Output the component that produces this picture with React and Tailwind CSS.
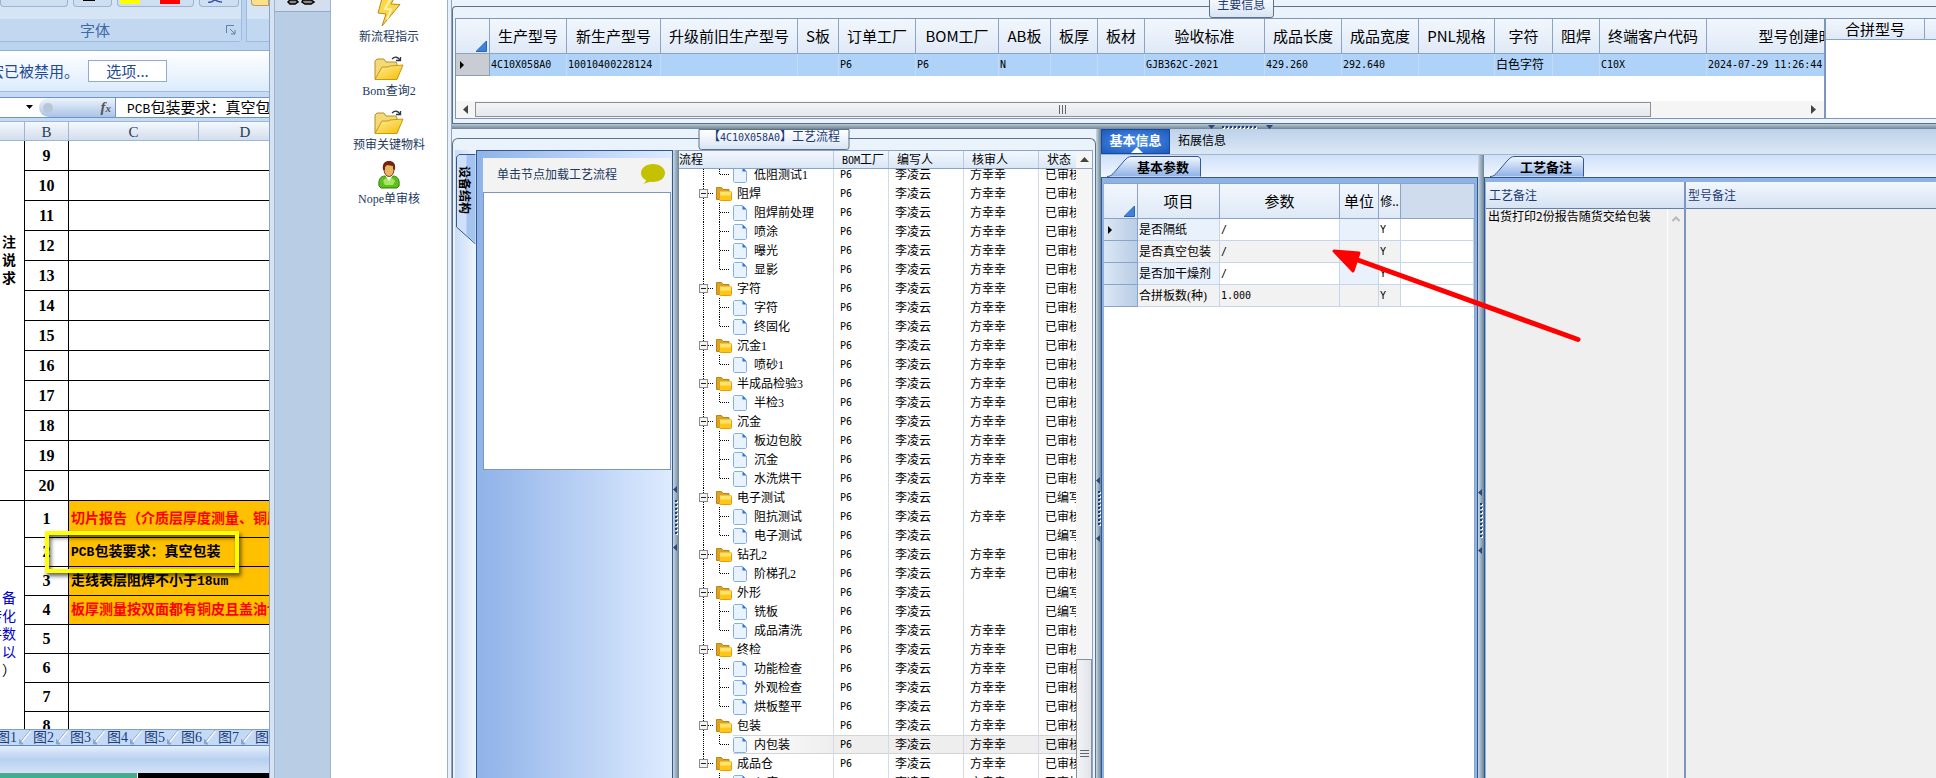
import React from 'react';
import clsx from 'clsx';

const mono = 'font-["DejaVu_Sans_Mono","Noto_Sans_CJK_SC",monospace] text-[10px]';
const song = 'font-["Liberation_Serif","Noto_Sans_CJK_SC",sans-serif] text-[12px]';

const mainColumns = [
    { label: '生产型号', width: 'w-[77px]', value: '4C10X058A0' },
    { label: '新生产型号', width: 'w-[94px]', value: '10010400228124' },
    { label: '升级前旧生产型号', width: 'w-[137px]', value: '' },
    { label: 'S板', width: 'w-[41px]', value: '' },
    { label: '订单工厂', width: 'w-[77px]', value: 'P6' },
    { label: 'BOM工厂', width: 'w-[83px]', value: 'P6' },
    { label: 'AB板', width: 'w-[52px]', value: 'N' },
    { label: '板厚', width: 'w-[47px]', value: '' },
    { label: '板材', width: 'w-[47px]', value: '' },
    { label: '验收标准', width: 'w-[120px]', value: 'GJB362C-2021' },
    { label: '成品长度', width: 'w-[77px]', value: '429.260' },
    { label: '成品宽度', width: 'w-[77px]', value: '292.640' },
    { label: 'PNL规格', width: 'w-[76px]', value: '' },
    { label: '字符', width: 'w-[58px]', value: '白色字符', cjk: true },
    { label: '阻焊', width: 'w-[47px]', value: '' },
    { label: '终端客户代码', width: 'w-[107px]', value: 'C10X' },
    { label: '型号创建时间', width: 'w-[194px]', value: '2024-07-29 11:26:44' },
];

const tree = [
    { name: '低阻测试1', leaf: true, last: true },
    { name: '阻焊' },
    { name: '阻焊前处理', leaf: true },
    { name: '喷涂', leaf: true },
    { name: '曝光', leaf: true },
    { name: '显影', leaf: true, last: true },
    { name: '字符' },
    { name: '字符', leaf: true },
    { name: '终固化', leaf: true, last: true },
    { name: '沉金1' },
    { name: '喷砂1', leaf: true, last: true },
    { name: '半成品检验3' },
    { name: '半检3', leaf: true, last: true },
    { name: '沉金' },
    { name: '板边包胶', leaf: true },
    { name: '沉金', leaf: true },
    { name: '水洗烘干', leaf: true, last: true },
    { name: '电子测试', open: true },
    { name: '阻抗测试', leaf: true },
    { name: '电子测试', leaf: true, last: true, open: true },
    { name: '钻孔2' },
    { name: '阶梯孔2', leaf: true, last: true },
    { name: '外形', open: true },
    { name: '铣板', leaf: true, open: true },
    { name: '成品清洗', leaf: true, last: true },
    { name: '终检' },
    { name: '功能检查', leaf: true },
    { name: '外观检查', leaf: true },
    { name: '烘板整平', leaf: true, last: true },
    { name: '包装' },
    { name: '内包装', leaf: true, last: true, selected: true },
    { name: '成品仓', end: true },
    { name: '入库', leaf: true, last: true, end: true },
];

const params = [
    { name: '是否隔纸', value: '/' },
    { name: '是否真空包装', value: '/' },
    { name: '是否加干燥剂', value: '/' },
    { name: '合拼板数(种)', value: '1.000' },
];

const notes = [
    { no: 1, text: '切片报告（介质层厚度测量、铜厚测量）', tone: 'text-[#f00]', height: 'h-[37px]' },
    { no: 2, latin: 'PCB', text: '包装要求：真空包装', tone: 'text-black', height: 'h-[29px]' },
    { no: 3, text: '走线表层阻焊不小于', tail: '18um', tone: 'text-black', height: 'h-[29px]' },
    { no: 4, text: '板厚测量按双面都有铜皮且盖油计算', tone: 'text-[#f00]', height: 'h-[29px]' },
];

function FolderOpenIcon() {
    return (
        <svg width="30" height="25" viewBox="0 0 30 25">
            <defs>
                <linearGradient id="fo" x1="0" y1="0" x2="1" y2="1">
                    <stop offset="0" stopColor="#fff0a0" />
                    <stop offset="1" stopColor="#f3bd00" />
                </linearGradient>
            </defs>
            <path d="M1 23V5l2-2h7l2 3h10l1 2v15z" fill="#f3d978" stroke="#b98f23" />
            <path d="M1 23.500 8 11h6l2-1 13-1-6 14.500z" fill="url(#fo)" stroke="#c79a10" />
            <path d="M18 3c3-3 6-2 8 1M22 4.500h4.500V1" fill="none" stroke="#2b3345" strokeWidth="1.300" />
        </svg>
    );
}

function BoltIcon() {
    return (
        <svg width="24" height="28" viewBox="0 0 24 28">
            <path d="M6-4h13l-5 9 9 .5L5 27l4-12-8-1z" fill="#fbd84b" stroke="#b98a1c" />
            <path d="M8-3h7L8 10l6 .5-4 10" fill="none" stroke="#fff3a8" strokeWidth="2" />
        </svg>
    );
}

function PersonIcon() {
    return (
        <svg width="22" height="28" viewBox="0 0 22 28">
            <path d="M1 25c-1-7 2-10 6-10h8c4 0 7 3 6 10l-2 2H3z" fill="#5fbf1d" stroke="#2f7d10" />
            <path d="M5 20c2-4 10-4 12 0l-2 4H7z" fill="#a5e663" />
            <path d="M7 14h8l-4 6z" fill="#fff" />
            <ellipse cx="11" cy="8.500" rx="5" ry="7" fill="#e9b366" stroke="#7a3c12" />
            <path d="M5 9C4 2 7 0 11 0s7 2 6 9l-2-1V5L9 4 7 6v3z" fill="#75230c" />
        </svg>
    );
}

function FolderIcon() {
    return (
        <svg className="shrink-0" width="16" height="14" viewBox="0 0 16 14">
            <path d="M0.500 12.500v-12h5l1.500 2h6v10z" fill="#d9a520" stroke="#b98518" />
            <rect x="3.500" y="4.500" width="12" height="9" rx="1" fill="#ffc61a" stroke="#e89c0c" />
            <path d="M4 5.500h11M4 7.500h11" stroke="#ffe36b" strokeWidth="2" />
        </svg>
    );
}

function DocIcon() {
    return (
        <svg className="shrink-0" width="14" height="16" viewBox="0 0 14 16">
            <path d="M1.500 0.500h8l4 4v10l-1 1h-11l-1-1v-13z" fill="#e9f3ff" stroke="#7fb0ee" />
            <path d="M9.500 0.500v4h4z" fill="#2e74d6" />
        </svg>
    );
}

function Guides({ row }) {
    if (!row.leaf) {
        return (
            <svg className="shrink-0" width="37" height="19">
                <path d={row.end ? 'M24.500 0v9' : 'M24.500 0v19'} stroke="#000" strokeDasharray="1 1" />
                <path d="M29 9.500h5" stroke="#000" strokeDasharray="1 1" />
                <rect x="20.500" y="5.500" width="8" height="8" fill="#f4f4f2" stroke="#8c8c8c" />
                <path d="M22 9.500h5" stroke="#222" />
            </svg>
        );
    }
    return (
        <svg className="shrink-0" width="54" height="19">
            {!row.end && <path d="M24.500 0v19" stroke="#000" strokeDasharray="1 1" />}
            <path d={row.last ? 'M40.500 0v10' : 'M40.500 0v19'} stroke="#000" strokeDasharray="1 1" />
            <path d="M41 9.500h9" stroke="#000" strokeDasharray="1 1" />
        </svg>
    );
}

function SlantTab({ children }) {
    return (
        <button className="relative h-[21px] w-[94px] pl-[30px] text-left text-[13px] leading-5 font-bold text-black">
            <svg className="absolute inset-0" width="94" height="21">
                <defs>
                    <linearGradient id="slant" x1="0" y1="0" x2="0" y2="1">
                        <stop offset="0" stopColor="#f3f8ff" />
                        <stop offset="1" stopColor="#8fb2e6" />
                    </linearGradient>
                </defs>
                <path d="M0 20.500c4 0 5-2 8-5L17 5c3-3 4-4.500 8-4.500h66l2.500 2v18" fill="url(#slant)" stroke="#33588f" />
            </svg>
            <span className="relative">{children}</span>
        </button>
    );
}

function Grip({ vertical }) {
    const dots = [0, 4, 8, 12, 16, 20, 24, 28, 32];
    return (
        <svg
            className="shrink-0"
            width={vertical ? 6 : 65}
            height={vertical ? 65 : 6}
            viewBox={vertical ? '0 0 6 65' : '0 0 65 6'}
        >
            <g transform={vertical ? 'matrix(0 1 1 0 0 0)' : undefined}>
                <path d={vertical ? 'M0 4h7l-3.500-4zM58 4h7l-3.500-4z' : 'M0 1h7l-3.500 4zM58 1h7l-3.500 4z'} fill="#2f4677" />
                {dots.map((d) => (
                    <g key={d}>
                        <rect x={15 + d} y="3" width="2" height="2" fill="#fff" />
                        <rect x={14 + d} y="2" width="2" height="2" fill="#203c78" />
                    </g>
                ))}
            </g>
        </svg>
    );
}

function Corner() {
    return (
        <svg className="mt-5 mr-0.5 ml-auto" width="11" height="11">
            <path d="M10.500 0v10.500H0z" fill="#3d83dc" stroke="#2c64b4" />
        </svg>
    );
}

function Marker() {
    return (
        <svg className="ml-1" width="5" height="8">
            <path d="M0 0l4 4-4 4z" />
        </svg>
    );
}

function Excel() {
    return (
        <div className="flex w-[269px] shrink-0 flex-col overflow-hidden bg-[#c5daf3]">
            <div className="flex h-[51px] shrink-0 items-start border-b border-[#8fb0d8] bg-[#bcd3ef] pb-2">
                <div className="flex h-[42px] w-[242px] shrink-0 flex-col rounded-br border-r border-b border-[#9dbbe0] bg-[#d6e5f5]">
                    <div className="flex h-[7px] gap-[5px]">
                        <div className="w-[68px] rounded-b border border-t-0 border-[#9ab4d6] bg-[#cfdff2]" />
                        <div className="flex w-[39px] justify-center rounded-b border border-t-0 border-[#9ab4d6] bg-[#cfdff2]">
                            <div className="mr-2 h-px w-3 bg-black" />
                        </div>
                        <div className="flex w-[77px] gap-5 rounded-b border border-t-0 border-[#9ab4d6] bg-[#cfdff2] pl-0.5">
                            <div className="h-1 w-5 bg-[#ff0]" />
                            <div className="h-1 w-5 bg-[#f00]" />
                        </div>
                        <div className="w-[40px] rounded-b border border-t-0 border-[#9ab4d6] bg-[#cfdff2]">
                            <svg className="ml-2" width="14" height="3">
                                <path d="M0 2.500c3 0 5-1 7-3 2 2 4 2.500 7 2.500" fill="none" stroke="#3954a8" strokeWidth="1.500" />
                            </svg>
                        </div>
                    </div>
                    <div className="mt-3 flex h-[22px] items-center bg-[#c1d8f0] text-[15px] text-[#3f69a8]">
                        <span className="w-[190px] text-center">字体</span>
                        <svg className="ml-9" width="10" height="10">
                            <path d="M0.500 8V0.500H8M4 4l5 5M9 5v4H5" fill="none" stroke="#5f7fae" />
                        </svg>
                    </div>
                </div>
                <div className="ml-1 flex h-[42px] flex-1 flex-col border-b border-l border-[#9dbbe0] bg-[#d6e5f5]">
                    <div className="ml-1 h-[6px] rounded-bl border border-t-0 border-[#c79c4a] bg-[#fbe08e]" />
                    <div className="mt-auto h-[22px] bg-[#c1d8f0]" />
                </div>
            </div>
            <div className="flex h-[41px] shrink-0 items-center border-b border-[#a0bcdf] bg-linear-to-t from-[#dcebfb] to-white text-[15px] text-[#1f4b93]">
                <div className="flex w-[79px] shrink-0 justify-end overflow-hidden whitespace-nowrap">宏已被禁用。</div>
                <button className="ml-[9px] h-[22px] w-[79px] border border-[#93abcf] bg-white leading-5">选项...</button>
            </div>
            <div className="mt-[5px] flex h-[21px] shrink-0 items-center border-y border-[#6f93c4] bg-white text-[15px]">
                <svg className="ml-[26px] shrink-0" width="8" height="5">
                    <path d="M0 0h7l-3.500 4z" />
                </svg>
                <div className="ml-[5px] flex h-full w-[77px] shrink-0 items-center rounded-l-full border-r border-[#6f93c4] bg-linear-to-b from-[#eef4fc] to-[#a9c3e6] pl-1">
                    <div className="size-[10px] rounded-full bg-[#b9c6d8]" />
                    <span className="mr-1 ml-auto font-['Liberation_Serif'] text-[15px] font-bold text-[#555] italic">
                        f<span className="text-[11px]">x</span>
                    </span>
                </div>
                <span className="shrink-0 pl-[11px] whitespace-nowrap">
                    <span className="font-['Liberation_Mono'] text-[13px]">PCB</span>包装要求：真空包装
                </span>
            </div>
            <div className="mt-[3px] flex h-5 shrink-0 border-y border-[#9db6d8] bg-linear-to-b from-[#f4f8fd] to-[#d3deed] text-center font-['Liberation_Serif'] text-[15px] leading-5 text-[#2b3c55]">
                <div className="w-[25px] shrink-0 border-r border-[#9db6d8]" />
                <div className="w-[44px] shrink-0 border-r border-[#9db6d8]">B</div>
                <div className="w-[130px] shrink-0 border-r border-[#9db6d8]">C</div>
                <div className="w-[92px] shrink-0">D</div>
            </div>
            <div className="relative min-h-0 flex-1 overflow-hidden bg-white">
                <table className="w-full table-fixed border-separate border-spacing-0 font-['Liberation_Serif','Noto_Sans_CJK_SC',serif] text-[16px]">
                    <colgroup>
                        <col className="w-[25px]" />
                        <col className="w-[44px]" />
                        <col />
                    </colgroup>
                    <tbody>
                        {[9, 10, 11, 12, 13, 14, 15, 16, 17, 18, 19, 20].map((n) => (
                            <tr key={n} className="h-[30px]">
                                {n === 9 && (
                                    <td rowSpan={12} className="border-r border-b border-black pt-[93px] pr-2 text-right align-top text-[14px] leading-[18px] font-bold">
                                        注<br />说<br />求
                                    </td>
                                )}
                                <td className="border-r border-b border-black p-0 text-center leading-5 font-bold">{n}</td>
                                <td className="border-b border-black p-0" />
                            </tr>
                        ))}
                        {notes.map((n) => (
                            <tr key={n.no} className={n.height}>
                                {n.no === 1 && (
                                    <td rowSpan={8} className="border-r border-black p-0 pt-[89px] align-top text-[14px] leading-[18px] text-[#00c]">
                                        <div className="flex flex-col items-end overflow-hidden pr-2 whitespace-nowrap">
                                            <span>备</span>
                                            <span>转化</span>
                                            <span>件数</span>
                                            <span>以</span>
                                            <span className="text-black">）</span>
                                        </div>
                                    </td>
                                )}
                                <td className="border-r border-b border-black p-0 text-center leading-5 font-bold">{n.no}</td>
                                <td className={clsx('overflow-hidden border-b border-black bg-[#ffc000] p-0 pl-0.5 text-[14px] leading-5 font-bold whitespace-nowrap', n.tone)}>
                                    {n.latin && <span className="font-['Liberation_Mono'] text-[13px]">{n.latin}</span>}
                                    {n.text}
                                    {n.tail && <span className="font-['Liberation_Mono'] text-[13px]">{n.tail}</span>}
                                </td>
                            </tr>
                        ))}
                        {[5, 6, 7, 8].map((n) => (
                            <tr key={n} className="h-[29px]">
                                <td className="border-r border-b border-black p-0 text-center leading-5 font-bold">{n}</td>
                                <td className="border-b border-black p-0" />
                            </tr>
                        ))}
                    </tbody>
                </table>
                {/* highlight frame over the packing requirement */}
                <div className="absolute top-[390px] left-[45px] h-[42px] w-[194px] border-4 border-[#ff0] shadow-[2px_3px_4px_rgba(0,0,0,0.6),inset_2px_3px_4px_rgba(0,0,0,0.6)]" />
            </div>
            <div className="flex h-4 shrink-0 overflow-hidden border-t border-[#7f9fcb] bg-[#c4d9f5] font-['Liberation_Serif','Noto_Sans_CJK_SC',serif] text-[14px] leading-4 text-[#1b3d7a]">
                <div className="-ml-1 flex">
                    {[1, 2, 3, 4, 5, 6, 7, 8].map((n) => (
                        <button key={n} className="flex w-[37px] shrink-0 items-center">
                            图{n}
                            <svg className="ml-0.5" width="12" height="15">
                                <path d="M0 14.500 11 1" stroke="#fff" strokeWidth="2" />
                                <path d="M0 13.500 11 0M0 9l4 5H0z" stroke="#8aa5cc" fill="#8aa5cc" />
                            </svg>
                        </button>
                    ))}
                </div>
            </div>
            <div className="h-7 shrink-0 border-t border-[#5f86bd] bg-linear-to-b from-[#e3eefb] via-[#b9d0f0] to-[#d3e2f6]" />
            <div className="flex h-[5px] shrink-0 bg-black">
                <div className="w-[138px] border-r border-white bg-[#45ad8c]" />
            </div>
        </div>
    );
}

function Shortcuts() {
    const items = [
        { label: '新流程指示', icon: <BoltIcon />, height: 'h-[46px]' },
        { label: 'Bom查询2', icon: <FolderOpenIcon />, height: 'h-[54px]' },
        { label: '预审关键物料', icon: <FolderOpenIcon />, height: 'h-[54px]' },
        { label: 'Nope单审核', icon: <PersonIcon />, height: 'h-[54px]' },
    ];
    return (
        <nav className="flex w-[183px] shrink-0 border-x border-[#8ba3c4] bg-[#d5e3f3]">
            <div className="ml-1 flex w-[57px] flex-col border-x border-[#9db3d2] bg-[#b9cde5]">
                <div className="h-3 border-b border-[#93a9c8] bg-[#d3dfef] pl-3">
                    <svg width="28" height="5">
                        <path d="M3 0h6l2 2-3 2H3L1 2zM16 0h8l3 2-3 2h-6l-3-2z" fill="#888" stroke="#000" strokeWidth="1.500" />
                    </svg>
                </div>
            </div>
            <ul className="flex flex-1 flex-col bg-white">
                {items.map((item) => (
                    <li key={item.label}>
                        <button className={clsx('flex w-full flex-col items-center justify-end gap-px overflow-hidden text-[#22385c]', item.height, song)}>
                            <span className="flex shrink-0 items-end">{item.icon}</span>
                            <span className="leading-[18px]">{item.label}</span>
                        </button>
                    </li>
                ))}
            </ul>
            <div className="w-1 border-l border-[#a5aebb] bg-[#e9f0f8]" />
        </nav>
    );
}

function MainInfo() {
    return (
        <section className="relative h-[123px] shrink-0 bg-[#eaf3fc] pt-[6px]">
            <div className="h-full rounded-tl border-t border-l border-[#5f7186] pt-[11px] pl-0.5">
                <div className="flex h-[101px] border-t border-b border-l border-[#7c97bd] bg-white">
                    <div className="flex min-w-0 flex-1 flex-col overflow-hidden">
                        <table className="w-[1445px] table-fixed border-separate border-spacing-0">
                            <thead>
                                <tr className="h-[35px]">
                                    <th className="w-[34px] border-r border-b border-[#8aa4c8] bg-linear-to-b from-[#f2f7fd] to-[#dfe9f6] p-0">
                                        <Corner />
                                    </th>
                                    {mainColumns.map((c) => (
                                        <th key={c.label} className={clsx('border-r border-b border-[#8aa4c8] bg-linear-to-b from-[#f2f7fd] to-[#dfe9f6] p-0 text-[15px] leading-5 font-normal whitespace-nowrap', c.width)}>
                                            {c.label}
                                        </th>
                                    ))}
                                </tr>
                            </thead>
                            <tbody>
                                <tr className="h-[22px]">
                                    <td className="border-r border-b border-[#8f9db0] bg-[#c9cdd3] p-0">
                                        <Marker />
                                    </td>
                                    {mainColumns.map((c) => (
                                        <td key={c.label} className={clsx('border-r border-[#c3dcf7] bg-[#afd3f8] p-0 pl-px leading-4 whitespace-nowrap', c.cjk ? song : mono)}>
                                            {c.value}
                                        </td>
                                    ))}
                                </tr>
                            </tbody>
                        </table>
                        <div className="mt-auto flex h-[17px] items-center bg-[#f5f5f5]">
                            <svg className="ml-[7px] shrink-0" width="12" height="9">
                                <path d="M5 0v9L0 4.500z" fill="#444" />
                            </svg>
                            <div className="flex h-[15px] w-[86%] items-center justify-center border border-[#8c8f94] bg-linear-to-b from-[#f3f4f7] to-[#e4e7ec]">
                                <svg width="9" height="9">
                                    <path d="M.5 0v9M3.500 0v9M6.500 0v9" stroke="#666" />
                                </svg>
                            </div>
                            <svg className="mr-[7px] ml-auto" width="6" height="9">
                                <path d="M0 0v9l5-4.500z" fill="#444" />
                            </svg>
                        </div>
                    </div>
                    <div className="w-[112px] shrink-0 border-l-2 border-[#7c97bd]">
                        <div className="flex h-[21px] border-b border-[#8aa4c8] bg-linear-to-b from-[#f2f7fd] to-[#dfe9f6] text-[15px] leading-5">
                            <div className="w-[99px] border-r border-[#8aa4c8] text-center">合拼型号</div>
                        </div>
                    </div>
                </div>
            </div>
            <div className="absolute top-[-7px] left-[51%] h-[25px] w-[65px] rounded-[3px] border border-[#5f7186] bg-linear-to-b from-white to-[#d9e5f4] text-center text-[12px] leading-[20px] text-[#1c3a74]">
                主要信息
            </div>
        </section>
    );
}

function ProcessTree() {
    return (
        <div className="flex min-w-0 flex-1 flex-col border-t border-r border-[#8aa4c8] bg-white">
            <div className={clsx('flex h-[18px] shrink-0 border-b border-[#8aa4c8] bg-linear-to-b from-[#f2f7fd] to-[#dbe7f6] leading-[18px]', song)}>
                <div className="min-w-0 flex-1 border-r border-[#b9c9e0]">流程</div>
                <div className="w-[55px] border-r border-[#b9c9e0] pl-2 whitespace-nowrap">
                    <span className="font-['DejaVu_Sans_Mono'] text-[10px]">BOM</span>工厂
                </div>
                <div className="w-[75px] border-r border-[#b9c9e0] pl-2">编写人</div>
                <div className="w-[75px] border-r border-[#b9c9e0] pl-2">核审人</div>
                <div className="w-[37px] pl-2 whitespace-nowrap">状态</div>
                <div className="flex w-4 items-center justify-center bg-[#f5f5f5]">
                    <svg width="9" height="5">
                        <path d="M0 5h9L4.500 0z" fill="#444" />
                    </svg>
                </div>
            </div>
            <div className="flex min-h-0 flex-1">
                <div className="min-w-0 flex-1 overflow-hidden">
                    <table className={clsx('-mt-1 w-full table-fixed border-separate border-spacing-0', song)}>
                        <colgroup>
                            <col />
                            <col className="w-[55px]" />
                            <col className="w-[75px]" />
                            <col className="w-[75px]" />
                            <col className="w-[37px]" />
                        </colgroup>
                        <tbody>
                            {tree.map((row, i) => {
                                const cell = clsx(
                                    'overflow-hidden p-0 leading-4 whitespace-nowrap',
                                    row.selected && 'border-y border-y-[#d4d4d4] bg-[#eeeeee]'
                                );
                                return (
                                    <tr key={i} className="h-[19px]">
                                        <td className="overflow-hidden border-r border-[#d5dbe4] p-0">
                                            <div className="flex h-[19px] items-center">
                                                <Guides row={row} />
                                                <div className={clsx('flex h-full min-w-0 flex-1 items-center whitespace-nowrap', row.leaf ? 'gap-[7px]' : 'gap-[5px]', row.selected && 'border-y border-[#d4d4d4] bg-linear-to-r from-white to-[#eeeeee]')}>
                                                    {row.leaf ? <DocIcon /> : <FolderIcon />}
                                                    {row.name}
                                                </div>
                                            </div>
                                        </td>
                                        <td className={clsx(cell, 'border-r border-r-[#d5dbe4]')}>
                                            <span className="pl-1.5 font-['DejaVu_Sans_Mono'] text-[10px]">P6</span>
                                        </td>
                                        <td className={clsx(cell, 'border-r border-r-[#d5dbe4]')}>
                                            <span className="pl-1.5">李凌云</span>
                                        </td>
                                        <td className={clsx(cell, 'border-r border-r-[#d5dbe4]')}>
                                            <span className="pl-1.5">{row.open ? '' : '方幸幸'}</span>
                                        </td>
                                        <td className={cell}>
                                            <span className="pl-1.5">{row.open ? '已编写' : '已审核'}</span>
                                        </td>
                                    </tr>
                                );
                            })}
                        </tbody>
                    </table>
                </div>
                <div className="flex w-4 shrink-0 flex-col justify-end bg-[#f5f5f5]">
                    <div className="flex h-[119px] justify-center border border-b-0 border-[#8c8f94] bg-linear-to-r from-[#f3f4f7] to-[#e0e4ea] pt-[90px]">
                        <svg width="9" height="9">
                            <path d="M0 .5h9M0 3.500h9M0 6.500h9" stroke="#666" />
                        </svg>
                    </div>
                </div>
            </div>
        </div>
    );
}

function Process() {
    return (
        <section className="relative flex w-[644px] shrink-0 flex-col bg-[#eaf3fc] pt-[9px]">
            <div className="flex min-h-0 flex-1 rounded-t-md border-x border-t border-[#5f7186] px-0.5 pt-[11px]">
                <div className="w-[21px] shrink-0 bg-linear-to-r from-[#c9dcf6] to-[#eef5ff] pt-1">
                    <button className="relative h-[90px] w-[21px]">
                        <svg className="absolute inset-0" width="21" height="90">
                            <path d="M20.500 .5H4L1.500 3v70l19 17" fill="#cfe0f8" stroke="#33588f" />
                            <path d="M20.500 1h-9v80l9 8z" fill="#a5c3ef" />
                        </svg>
                        <span className="absolute top-[12px] left-0.5 text-[12px] leading-4 font-bold [text-orientation:sideways] [writing-mode:vertical-rl]">
                            设备结构
                        </span>
                    </button>
                </div>
                <div className="w-[197px] shrink-0 border-x border-t border-[#33588f] bg-linear-to-r from-[#8fb2e8] to-[#deebff] pt-[7px] pr-px pl-[6px]">
                    <div className="flex h-[34px] items-center justify-between bg-[#f3f3f3] pr-1.5 pb-0.5 pl-3.5 text-[12px] text-[#22385c]">
                        单击节点加载工艺流程
                        <svg width="24" height="20">
                            <path d="M12 0c7 0 12 4 12 9s-5 9-12 9c-1 0-2 0-3-.2L2 20c2-1 3-3 3-4-3-1-5-4-5-7 0-5 5-9 12-9z" fill="#c3c100" />
                        </svg>
                    </div>
                    <div className="h-[278px] border border-[#7c97bd] bg-white" />
                </div>
                <div className="flex w-[6px] shrink-0 flex-col bg-linear-to-r from-[#c9d8e6] to-[#6d8494] pt-[336px]">
                    <Grip vertical />
                </div>
                <ProcessTree />
            </div>
            <div className={clsx('absolute top-0 left-1/2 h-[21px] w-[151px] -translate-x-1/2 rounded-b-[3px] border border-[#5f7186] bg-linear-to-b from-white to-[#d9e5f4] text-center leading-[14px] whitespace-nowrap text-[#1c3a74]', song)}>
                【<span className="font-['DejaVu_Sans_Mono'] text-[10px]">4C10X058A0</span>】工艺流程
            </div>
        </section>
    );
}

function ParamTable() {
    const head = 'border-r border-b border-[#8aa4c8] bg-linear-to-b from-[#f2f7fd] to-[#dfe9f6] p-0 text-[15px] leading-5 font-normal whitespace-nowrap';
    return (
        <table className="w-full table-fixed border-separate border-spacing-0">
            <thead>
                <tr className="h-[35px]">
                    <th className={clsx(head, 'w-[34px]')}>
                        <Corner />
                    </th>
                    <th className={clsx(head, 'w-[82px]')}>项目</th>
                    <th className={clsx(head, 'w-[120px]')}>参数</th>
                    <th className={clsx(head, 'w-[39px]')}>单位</th>
                    <th className={clsx(head, 'w-[22px] overflow-hidden text-[12px]!')}>修..</th>
                    <th className="border-b border-[#8aa4c8] bg-[#cfdcee] p-0" />
                </tr>
            </thead>
            <tbody>
                {params.map((p, i) => {
                    const odd = i % 2 === 1;
                    const line = 'border-r border-b border-[#c5d5ec] p-0 pl-px leading-4 whitespace-nowrap';
                    return (
                        <tr key={p.name} className="h-[22px]">
                            <td className="border-r border-b border-[#8aa4c8] bg-linear-to-r from-[#dbe7f4] to-[#b9cde6] p-0">{i === 0 && <Marker />}</td>
                            <td className={clsx(line, song, odd ? 'bg-[#f2f2f2]' : 'bg-[#e8f1fc]')}>{p.name}</td>
                            <td className={clsx(line, mono, odd ? 'bg-[#f2f2f2]' : 'bg-white')}>{p.value}</td>
                            <td className={clsx(line, odd ? 'bg-[#f2f2f2]' : 'bg-[#e8f1fc]')} />
                            <td className={clsx(line, mono, odd ? 'bg-[#f2f2f2]' : 'bg-white')}>Y</td>
                            <td className={line} />
                        </tr>
                    );
                })}
            </tbody>
        </table>
    );
}

function Details() {
    return (
        <section className="flex min-w-0 flex-1 flex-col">
            <div className="flex h-[26px] shrink-0 border-b border-[#a3b6cf] bg-linear-to-b from-[#bdd2ea] to-[#dbe7f5]">
                <button className="relative w-[69px] border border-[#174a9c] bg-radial from-[#4f93ee] to-[#1c59bd] pb-1 text-[13px] leading-5 font-bold text-white">
                    基本信息
                    <svg className="absolute bottom-0 left-[29px]" width="12" height="6">
                        <path d="M0 6h12L6 0z" fill="#fff" />
                    </svg>
                </button>
                <button className="px-2 pb-1 text-[12px] leading-5">拓展信息</button>
            </div>
            <div className="flex min-h-0 flex-1">
                <div className="flex w-[377px] shrink-0 flex-col bg-linear-to-b from-[#cfe0f8] from-0% to-[#f0f6ff] to-[22px]">
                    <div className="flex h-[22px] shrink-0 items-end pl-1.5">
                        <SlantTab>基本参数</SlantTab>
                    </div>
                    <div className="flex-1 border-x border-t border-[#33588f] bg-[#8fb2e6] px-0.5 pt-[5px]">
                        <div className="h-full border-t border-r border-[#8aa4c8] bg-white">
                            <ParamTable />
                        </div>
                    </div>
                </div>
                <div className="flex w-[6px] shrink-0 flex-col bg-linear-to-r from-[#c9d8e6] to-[#6d8494] pt-[334px]">
                    <Grip vertical />
                </div>
                <div className="flex min-w-0 flex-1 flex-col bg-linear-to-b from-[#cfe0f8] from-0% to-[#f0f6ff] to-[22px]">
                    <div className="flex h-[22px] shrink-0 items-end pl-1.5">
                        <SlantTab>工艺备注</SlantTab>
                    </div>
                    <div className="flex min-h-0 flex-1 border-t border-l border-[#33588f] bg-[#8fb2e6] pt-1 pl-px text-[12px]">
                        <div className="flex w-[200px] shrink-0 flex-col border-r-2 border-[#7c97bd]">
                            <label htmlFor="processNote" className="h-[27px] shrink-0 border-b border-[#5f7fae] bg-linear-to-b from-[#f2f7fd] to-[#d6e3f3] pl-[3px] leading-[26px] text-[#1c3a74]">
                                工艺备注
                            </label>
                            <div className="flex min-h-0 flex-1 bg-[#efefef]">
                                <textarea
                                    id="processNote"
                                    className="min-w-0 flex-1 resize-none overflow-hidden border-r border-white pl-0.5 text-[12px] leading-[14px] whitespace-nowrap outline-none"
                                    defaultValue="出货打印2份报告随货交给包装"
                                />
                                <svg className="mx-1 mt-[7px]" width="8" height="6">
                                    <path d="M.5 5 4 1.500 7.500 5" fill="none" stroke="#b8b8b8" strokeWidth="2" />
                                </svg>
                            </div>
                        </div>
                        <div className="flex min-w-0 flex-1 flex-col">
                            <label htmlFor="modelNote" className="h-[27px] shrink-0 border-b border-[#5f7fae] bg-linear-to-b from-[#f2f7fd] to-[#d6e3f3] pl-0.5 leading-[26px] text-[#1c3a74]">
                                型号备注
                            </label>
                            <textarea id="modelNote" className="min-h-0 flex-1 resize-none bg-[#efefef] outline-none" />
                        </div>
                    </div>
                </div>
            </div>
        </section>
    );
}

export default function App() {
    return (
        <div className="relative flex h-screen overflow-hidden bg-white font-['Noto_Sans_CJK_SC',sans-serif] text-black">
            <Excel />
            <Shortcuts />
            <main className="flex min-w-0 flex-1 flex-col">
                <MainInfo />
                <div className="flex h-[6px] shrink-0 justify-center border-t border-[#5f7186] bg-linear-to-b from-[#b9c8d8] to-[#6d8494] pl-[92px]">
                    <Grip />
                </div>
                <div className="flex min-h-0 flex-1">
                    <Process />
                    <div className="flex w-[5px] shrink-0 flex-col bg-linear-to-r from-[#c9d8e6] to-[#6d8494] pt-[348px]">
                        <Grip vertical />
                    </div>
                    <Details />
                </div>
            </main>
            {/* pointer to the vacuum packing row */}
            <svg className="pointer-events-none absolute top-[246px] left-[1330px]" width="256" height="98">
                <path d="M25 13 248 93.500" stroke="#f00" strokeWidth="5" strokeLinecap="round" />
                <path d="M4 5l25 2-6 18z" fill="#f00" stroke="#f00" strokeWidth="3" strokeLinejoin="round" />
            </svg>
        </div>
    );
}
